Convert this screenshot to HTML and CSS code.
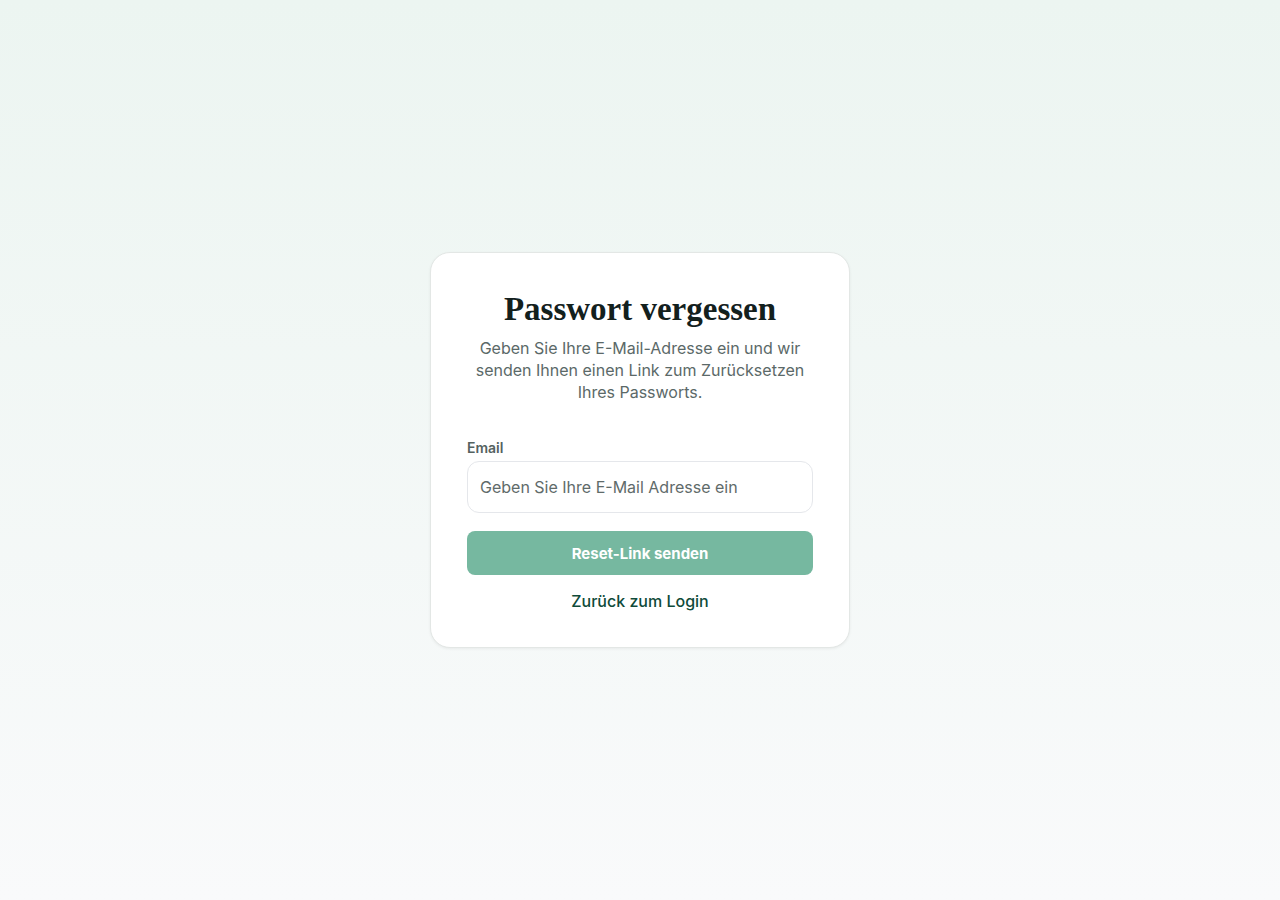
FILE: index.html
```html
<!DOCTYPE html>
<html lang="de">
<head>
    <meta charset="UTF-8">
    <meta name="viewport" content="width=device-width, initial-scale=1.0">
    <title>Passwort vergessen</title>
    <link rel="stylesheet" href="styles.css">
</head>
<body>

    <main class="page">
        <div class="card">
            <div class="card-head">
                <h1>Passwort vergessen</h1>
                <p>Geben Sie Ihre E-Mail-Adresse ein und wir senden Ihnen einen Link zum Zurücksetzen Ihres Passworts.</p>
            </div>

            <form class="form" onsubmit="return false;">
                <div class="field">
                    <label for="email">Email</label>
                    <input type="email" id="email" placeholder="Geben Sie Ihre E-Mail Adresse ein">
                </div>
                <button type="submit">Reset-Link senden</button>
            </form>

            <a class="back" href="#">Zurück zum Login</a>
        </div>
    </main>

</body>
</html>
```

FILE: styles.css
```css
* {
    box-sizing: border-box;
}

body {
    margin: 0;
    font-family: Inter, "Noto Sans", sans-serif;
    background: linear-gradient(to bottom, #ecf5f1, #f9fafb);
    color: #111;
}

.page {
    min-height: 900px;
    display: flex;
    align-items: center;
    justify-content: center;
}

.card {
    width: 420px;
    background: #fff;
    border: 1px solid #e3e7e5;
    border-radius: 20px;
    box-shadow: 0 1px 3px rgba(0, 0, 0, 0.06);
    padding: 36px 36px 35px;
    display: flex;
    flex-direction: column;
}

.card-head {
    text-align: center;
    margin-bottom: 35px;
}

.card-head h1 {
    font-family: "Liberation Serif", "DejaVu Serif", serif;
    font-size: 33px;
    font-weight: 700;
    color: #13201d;
    margin: 0 0 8px;
    line-height: 40px;
}

.card-head p {
    margin: 0;
    font-size: 16px;
    line-height: 22px;
    color: #5b6968;
}

.form {
    display: flex;
    flex-direction: column;
    gap: 18px;
}

.field {
    display: flex;
    flex-direction: column;
    gap: 3px;
}

.field label {
    font-size: 14px;
    font-weight: 600;
    color: #55625f;
    line-height: 20px;
}

.field input {
    height: 52px;
    border: 1px solid #e5e7eb;
    border-radius: 12px;
    padding: 0 12px;
    font-family: inherit;
    font-size: 16px;
    color: #111;
}

.field input::placeholder {
    color: #5f6b6a;
}

button {
    height: 44px;
    border: none;
    border-radius: 8px;
    background: #76b8a0;
    color: #fff;
    font-family: inherit;
    font-size: 15px;
    font-weight: 700;
    cursor: pointer;
}

.back {
    margin-top: 15px;
    text-align: center;
    font-size: 16px;
    font-weight: 500;
    line-height: 22px;
    color: #0f4b3a;
    text-decoration: none;
}
```
